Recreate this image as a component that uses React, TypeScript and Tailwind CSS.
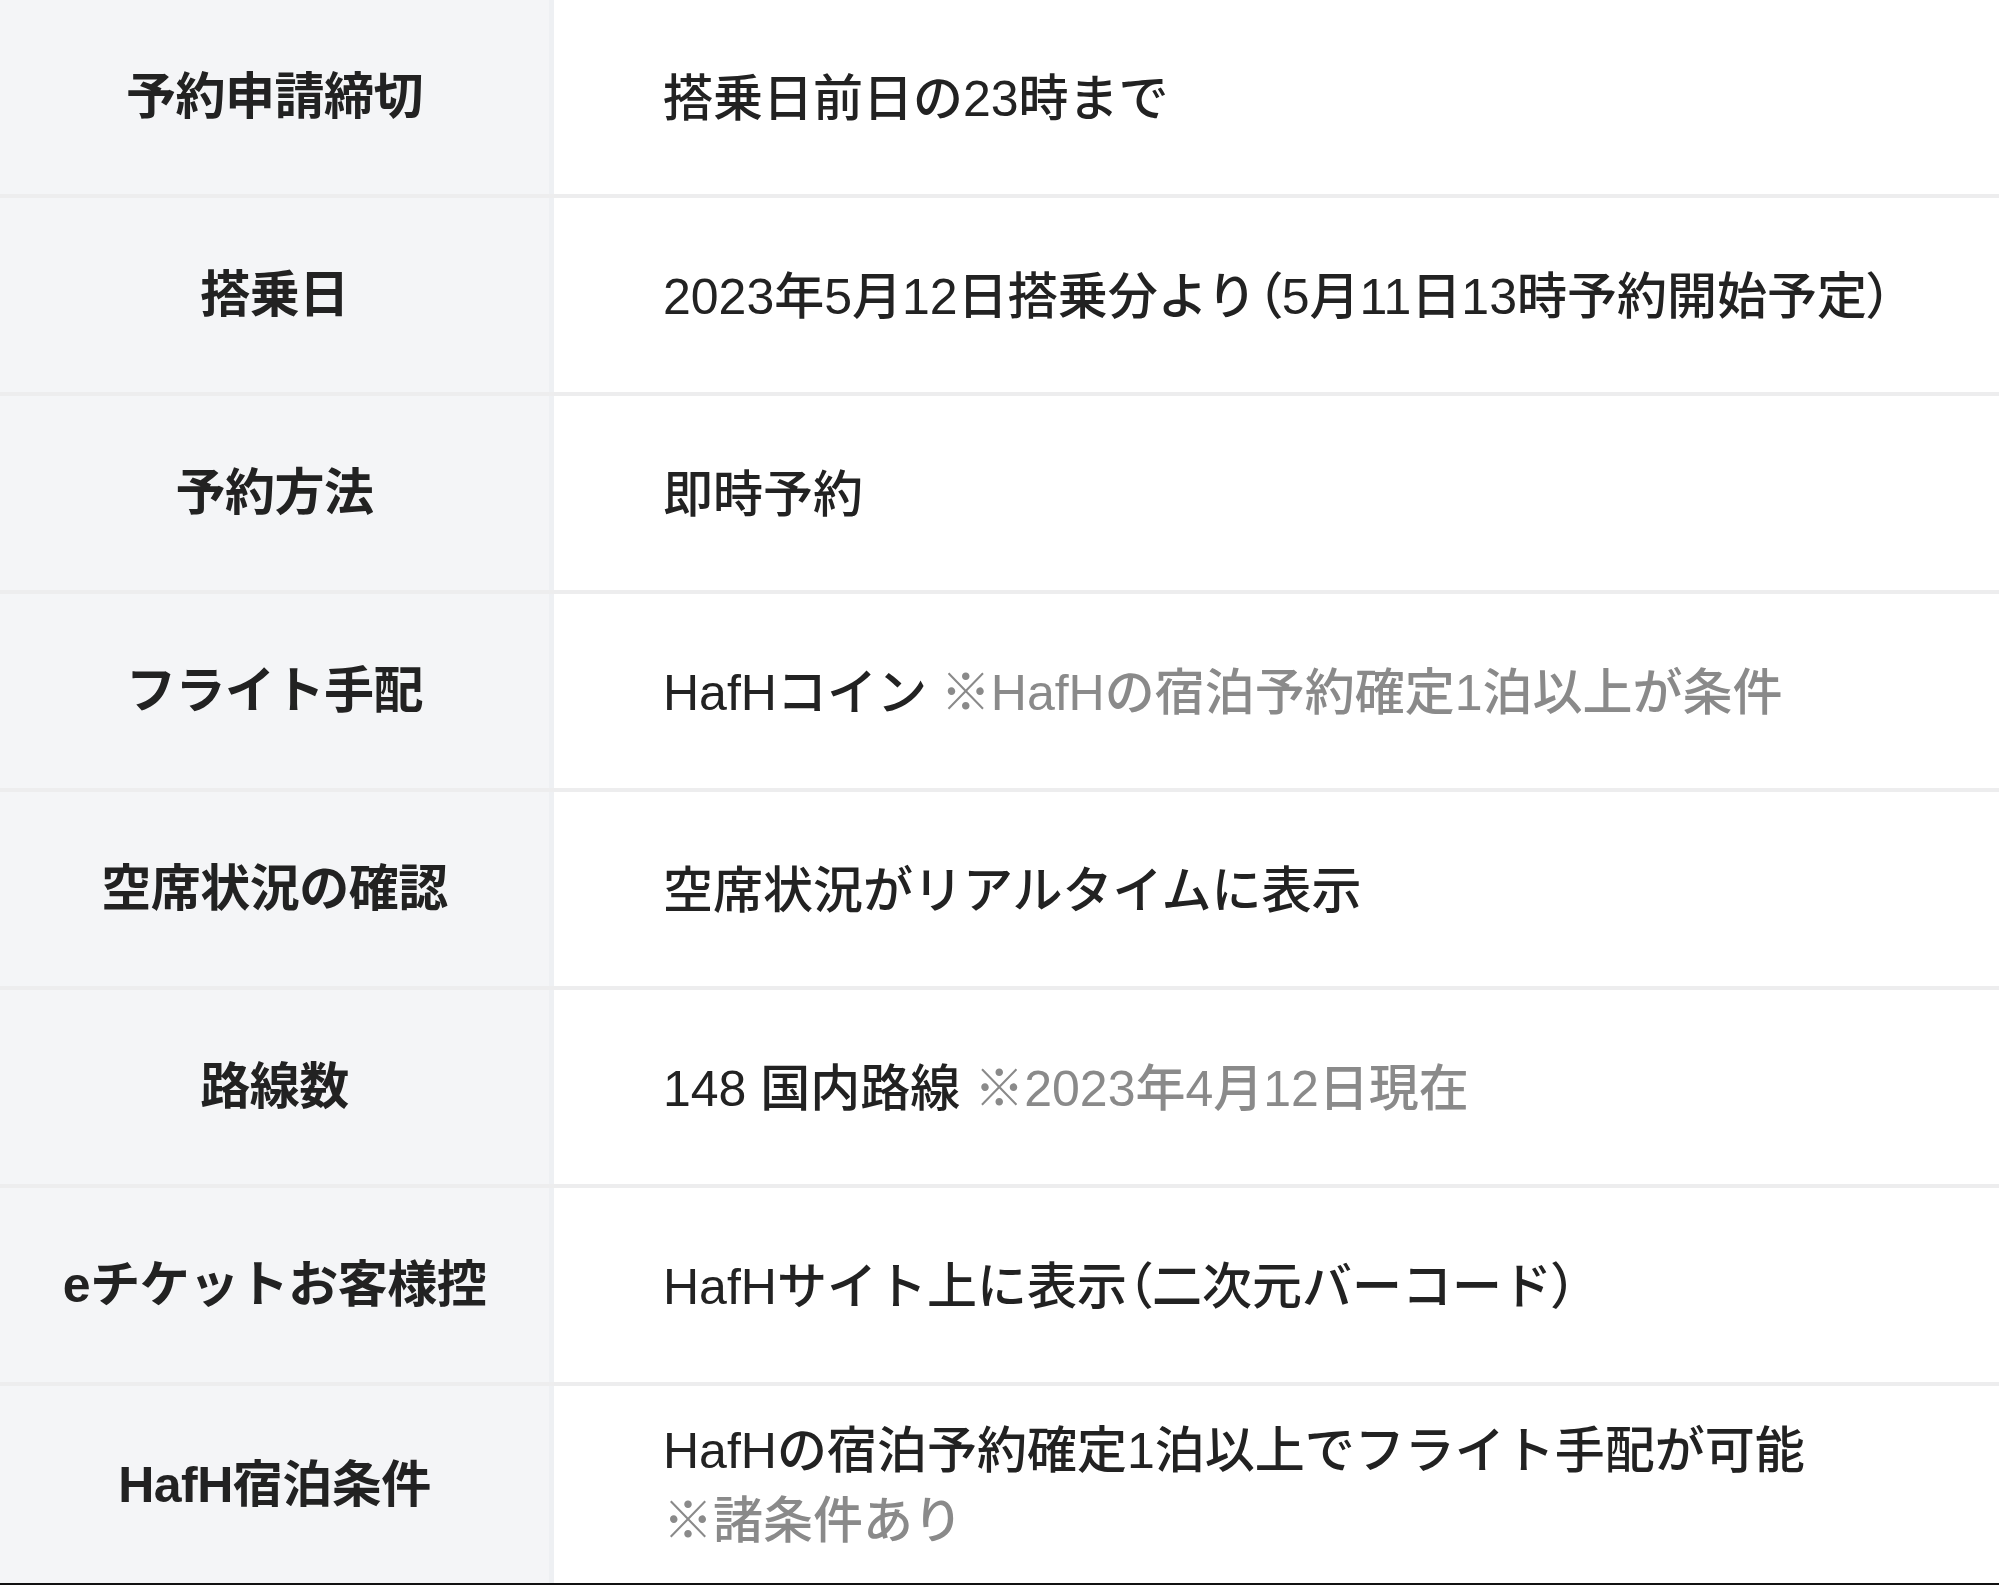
type Row = {
  label: string;
  value: React.ReactNode;
};

const Paren = ({ ch }: { ch: string }) => (
  <span className="[font-feature-settings:'palt']">{ch}</span>
);

const rows: Row[] = [
  { label: '予約申請締切', value: '搭乗日前日の23時まで' },
  {
    label: '搭乗日',
    value: (
      <>
        2023年5月12日搭乗分より
        <Paren ch="（" />
        5月11日13時予約開始予定
        <Paren ch="）" />
      </>
    ),
  },
  { label: '予約方法', value: '即時予約' },
  {
    label: 'フライト手配',
    value: (
      <>
        HafHコイン <span className="text-[#8a8a8a]">※HafHの宿泊予約確定1泊以上が条件</span>
      </>
    ),
  },
  { label: '空席状況の確認', value: '空席状況がリアルタイムに表示' },
  {
    label: '路線数',
    value: (
      <>
        148 国内路線 <span className="text-[#8a8a8a]">※2023年4月12日現在</span>
      </>
    ),
  },
  {
    label: 'eチケットお客様控',
    value: (
      <>
        HafHサイト上に表示
        <Paren ch="（" />
        二次元バーコード
        <Paren ch="）" />
      </>
    ),
  },
  {
    label: 'HafH宿泊条件',
    value: (
      <>
        HafHの宿泊予約確定1泊以上でフライト手配が可能
        <br />
        <span className="text-[#8a8a8a]">※諸条件あり</span>
      </>
    ),
  },
];

export default function App() {
  return (
    <div
      className="w-[1999px] h-[1585px] overflow-hidden bg-white text-[#222222]"
      style={{ fontFamily: '"Liberation Sans", "Noto Sans CJK JP", sans-serif' }}
    >
      {rows.map((row, i) => {
        const last = i === rows.length - 1;
        return (
          <div
            key={row.label}
            className={`flex ${
              last ? 'h-[199px] border-b-2 border-[#111111]' : 'h-[198px] border-b-4 border-[#ededee]'
            }`}
          >
            <div className="flex w-[554px] shrink-0 items-center justify-center border-r-[5px] border-[#eef0f3] bg-[#f4f5f7]">
              <span className="text-[50px] font-bold leading-none tracking-[-0.5px]">{row.label}</span>
            </div>
            <div className="flex flex-1 items-center pl-[109px]">
              <p className="text-[50px] font-medium leading-[70px] pt-[3px]">{row.value}</p>
            </div>
          </div>
        );
      })}
    </div>
  );
}
